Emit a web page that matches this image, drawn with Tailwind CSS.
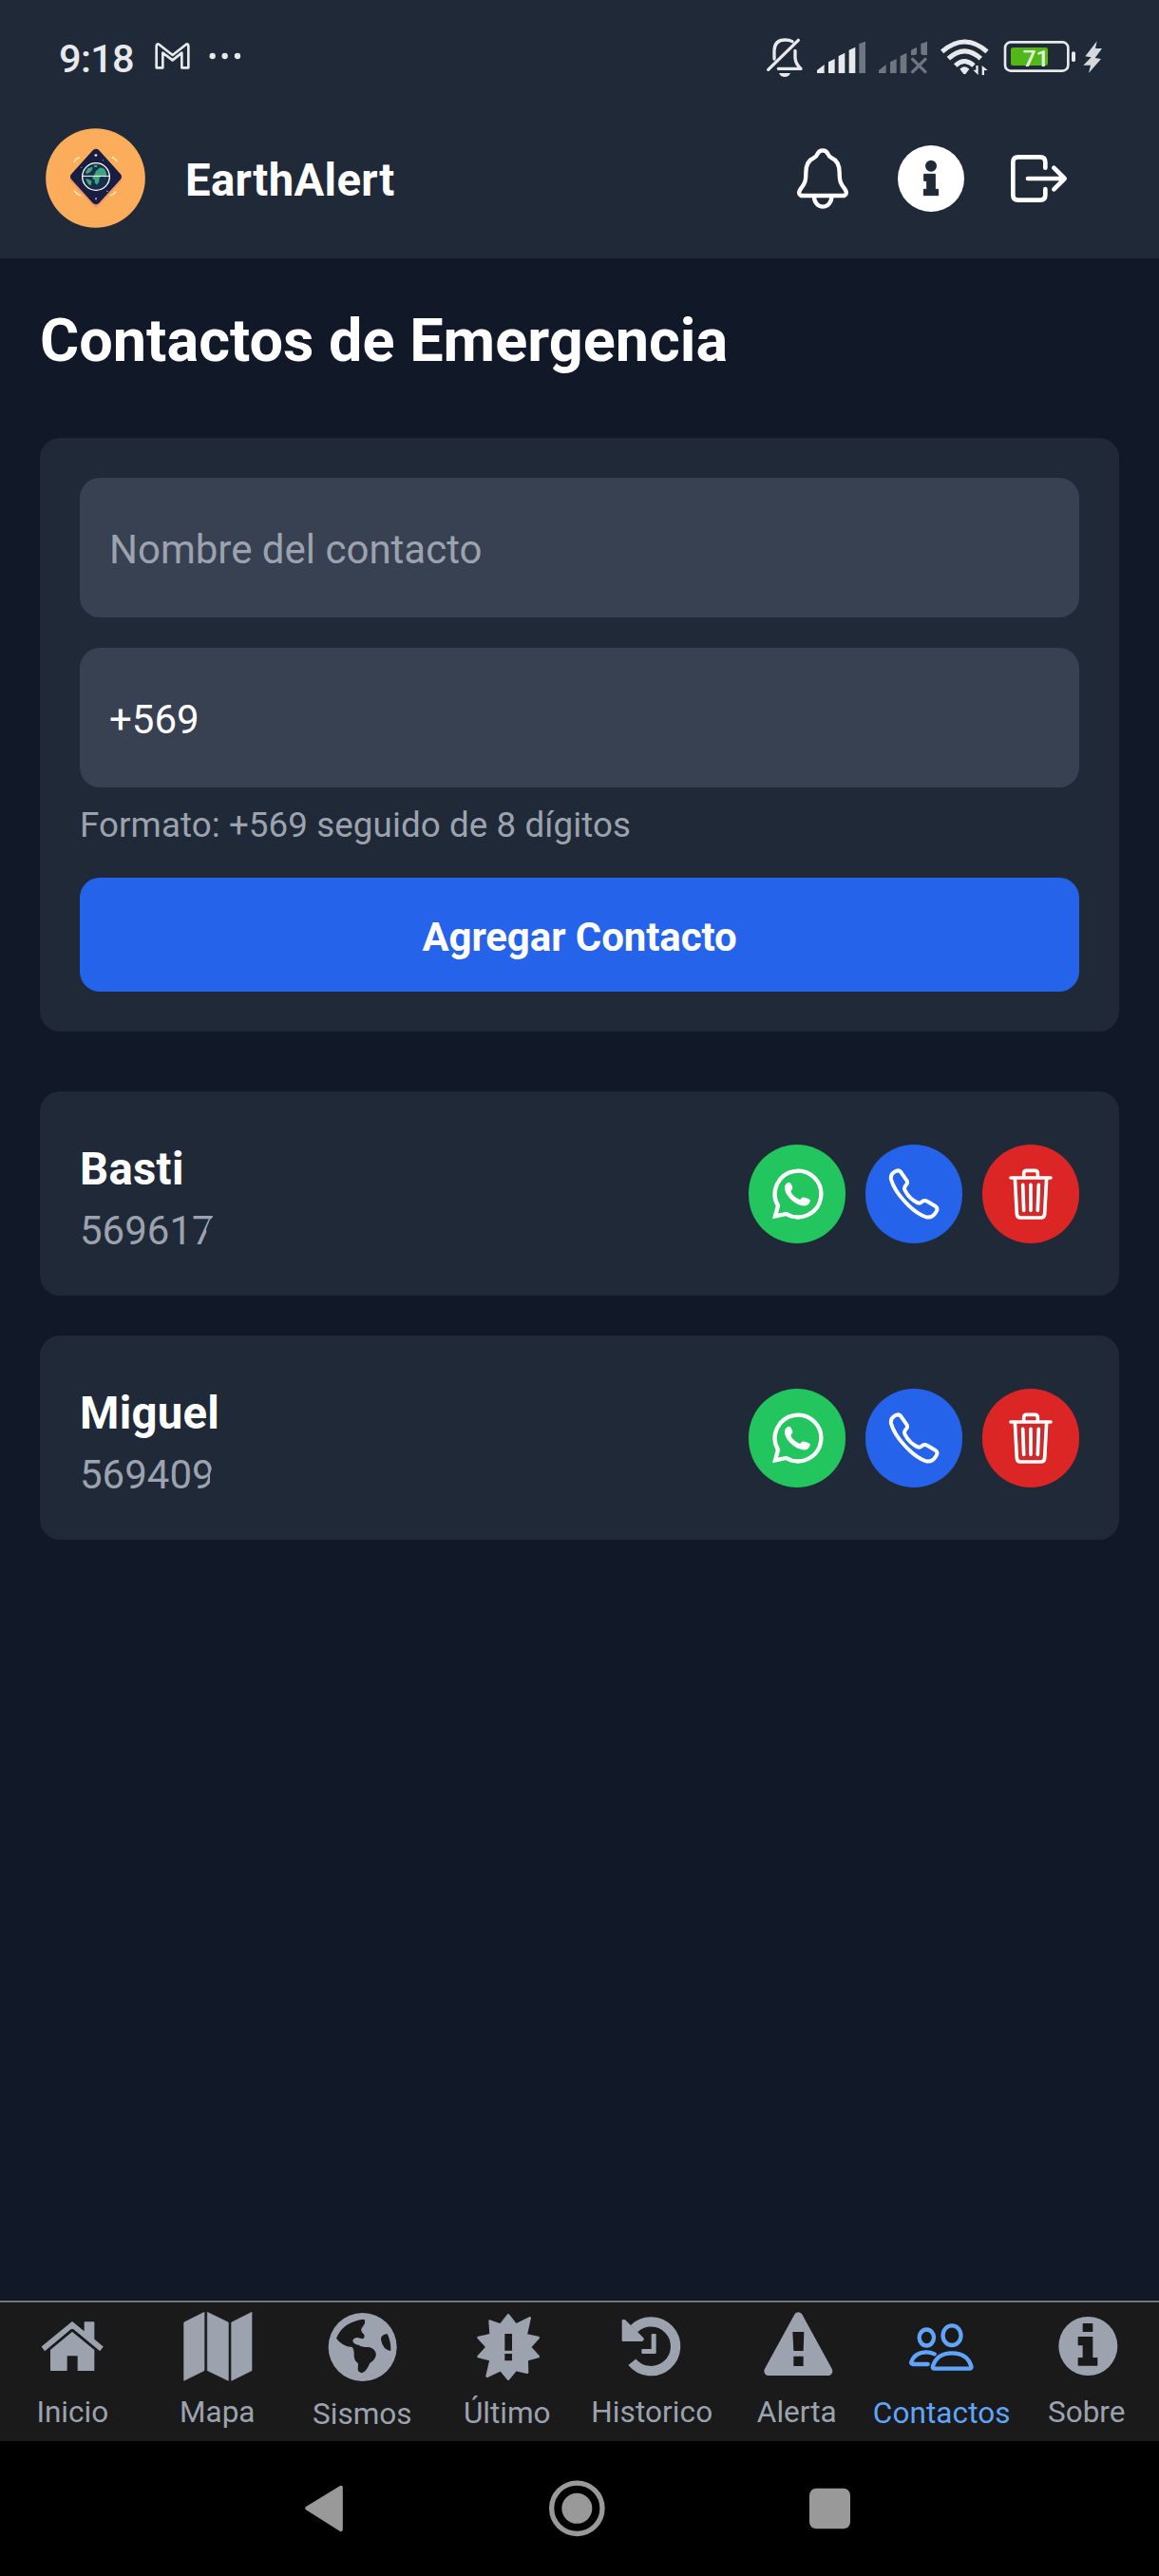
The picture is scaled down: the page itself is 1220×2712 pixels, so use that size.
<!DOCTYPE html>
<html lang="es">
<head>
<meta charset="utf-8">
<title>EarthAlert</title>
<script src="https://cdn.jsdelivr.net/npm/@tailwindcss/browser@4"></script>
</head>
<body class="bg-[#111827]">
<svg class="hidden">
  <symbol id="whatsapp" viewBox="147 291 180 180">
    <path d="M168 451L177 418A73 73 0 1 1 203 444Z" fill="none" stroke="#fff" stroke-width="13"/>
    <path d="M203 349Q210 341 217 347Q224 358 223 364L217 372Q222 388 246 399L253 392Q262 389 278 399Q280 408 270 416Q252 424 224 404Q196 380 198 360Q199 352 203 349Z" fill="#fff"/>
  </symbol>
  <symbol id="call" viewBox="516 291 180 180">
    <path d="M545 311Q557 303 564 311L583 338Q588 346 581 353Q573 360 578 370Q591 396 618 409Q626 412 632 405Q640 400 648 404L673 419Q684 426 676 438Q664 458 645 454C600 440 545 375 534 335Q531 318 545 311Z" fill="none" stroke="#fff" stroke-width="12" stroke-linejoin="round"/>
  </symbol>
  <symbol id="trash" viewBox="885 291 180 180">
    <path d="M925 330L931 444Q932 456 943 456H1007Q1018 456 1019 444L1025 330Z" fill="#cf2929"/>
    <path d="M912 330H1038M953 328V316Q953 307 962 307H988Q997 307 997 316V328M925 330L931 444Q932 456 943 456H1007Q1018 456 1019 444L1025 330M950 352L953 433M975 352V433M1000 352L997 433" fill="none" stroke="#fff" stroke-width="11" stroke-linecap="round" stroke-linejoin="round"/>
  </symbol>
</svg>
<div class="flex h-[2712px] w-[1220px] flex-col overflow-hidden bg-[#111827] font-[Roboto,sans-serif] text-white">

  <header class="h-[272px] bg-[#1f2937]">
    <div class="flex h-[135px] items-start pl-[62px] pr-[59px] text-[#e7e9ec]">
      <span class="mt-[37px] w-[101px] text-[41.5px] leading-[50px] font-medium tracking-[-0.7px]">9:18</span>
      <svg class="mt-[44px] h-[30px] w-[38px]" viewBox="489 132 114 90"><path d="M494 214V146Q494 136 503 141L545 174L587 141Q595 136 595 146V214H574V167L545 190L514 167V214Z" fill="none" stroke="currentColor" stroke-width="8" stroke-linejoin="round"/></svg>
      <svg class="mt-[54px] ml-[18px] h-[10px] w-[36px]" viewBox="657 162 108 30"><g fill="currentColor"><circle cx="671" cy="177" r="9.5"/><circle cx="710" cy="177" r="9.5"/><circle cx="750" cy="177" r="9.5"/></g></svg>
      <div class="mt-[39px] ml-auto flex">
        <svg class="h-[43px] w-[40px]" viewBox="78 117 120 129"><g fill="none" stroke="currentColor" stroke-width="10" stroke-linecap="round" stroke-linejoin="round"><path d="M105 186V160Q106 126 139 126Q153 126 162 131M171 160V183Q173 203 189 217H118M86 220L181 127"/></g><path d="M120 231H156Q151 243 138 243Q125 243 120 231Z" fill="currentColor"/></svg>
        <svg class="ml-[13px] h-[43px] w-[53px]" viewBox="237 117 159 129"><path fill="currentColor" d="M240 231V222L263 204V231ZM276 231V196L296 186V231ZM308 231V177L328 167V231ZM341 231V158L361 149V231Z"/><path fill="#6f7681" d="M373 231V138L393 131V231Z"/></svg>
        <svg class="ml-[12px] h-[43px] w-[53px]" viewBox="432 117 159 129"><path fill="#6f7681" d="M435 231V222L458 204V231ZM471 231V196L491 186V231ZM503 231V177L523 167V231ZM537 174V158L555 149V170L550 174ZM568 170V138L588 131V174H574Z"/><path d="M542 187L582 227M582 187L542 227" stroke="#6f7681" stroke-width="10" stroke-linecap="round"/></svg>
        <svg class="ml-[12px] h-[43px] w-[53px]" viewBox="627 117 159 129"><g fill="none" stroke="currentColor" stroke-width="15"><path d="M635 163Q706 101 777 163"/><path d="M655 185Q706 138 757 185"/><path d="M677 207Q706 180 735 207"/></g><path fill="currentColor" d="M691 218Q706 204 721 218L709 234H703ZM742 207H749V237L733 221H742ZM761 237V207L779 222H768V237Z"/></svg>
        <svg class="ml-[14px] h-[43px] w-[76px]" viewBox="828 117 228 129"><rect x="834" y="133" width="199" height="91" rx="18" fill="none" stroke="currentColor" stroke-width="8"/><rect x="852" y="150" width="117" height="57" rx="7" fill="#52b81a"/><rect x="1044" y="163" width="12" height="32" rx="5" fill="currentColor"/><text x="890" y="210" font-family="Roboto" font-size="73" font-weight="500" fill="#e9fbe0">71</text></svg>
        <svg class="ml-[7px] h-[43px] w-[22px]" viewBox="1077 117 66 129"><path fill="#d5d8dc" d="M1124 130L1087 178L1106 181L1081 206L1104 206L1098 231L1137 186L1118 183L1140 153L1119 153Z"/></svg>
      </div>
    </div>
    <div class="flex h-[105px] items-center pl-[48px] pr-[96px]">
      <svg class="h-[105px] w-[105px]" viewBox="144 405 315 315">
        <circle cx="301.500" cy="562.500" r="157" fill="#fbad5b"/>
        <path d="M303 486L373 566L303 642L233 566Z" fill="#f09668" stroke="#f09668" stroke-width="24" stroke-linejoin="round"/>
        <path d="M303 484L370 558L303 632L236 558Z" fill="#191d42" stroke="#191d42" stroke-width="27" stroke-linejoin="round"/>
        <path d="M233 513Q240 500 252 496M353 496Q365 500 369 511M235 602Q241 614 257 617M349 617Q361 614 366 605" fill="none" stroke="#fff0c9" stroke-width="4"/>
        <circle cx="303" cy="557" r="42" fill="#16304a"/>
        <path fill="#3fa380" d="M270 545L277 532L292 527V535L285 544L275 549ZM297 521H307V528H297ZM299 549L303 540L317 529L330 533L337 549L333 560L322 556L314 561L313 574L306 584L299 577V568L291 564ZM270 564L281 567L290 572L287 586L279 582Z"/>
        <circle cx="303" cy="558" r="43" fill="none" stroke="#fff" stroke-width="4"/>
        <path d="M260 556H347M303 486V495M298 490H307M303 624V631" stroke="#fff" stroke-width="3"/>
        <path d="M255 529H259M336 604H342M324 506H327" stroke="#54b9a0" stroke-width="3"/>
      </svg>
      <h1 class="ml-[42px] pt-[5px] text-[47.25px] leading-[60px] font-bold tracking-[0.35px]">EarthAlert</h1>
      <svg class="ml-auto h-[70px] w-[60px]" viewBox="168 459 180 210"><g fill="none" stroke="#fff" stroke-width="13" stroke-linejoin="round"><path d="M258 475Q246 475 241 487Q238 495 231 498C210 507 205 525 205 545C205 575 200 583 188 597Q178 612 190 618H326Q338 612 328 597C316 583 311 575 311 545C311 525 306 507 285 498Q278 495 275 487Q270 475 258 475Z"/><path d="M231 622A27.500 31 0 0 0 286 622"/></g></svg>
      <svg class="ml-[49px] h-[70px] w-[70px]" viewBox="495 459 210 210"><circle cx="600" cy="564" r="105" fill="#fff"/><circle cx="600" cy="524" r="18" fill="#1f2937"/><path d="M578 550H613V598H623V617H577V598H587V571H578Z" fill="#1f2937" stroke="#1f2937" stroke-width="3" stroke-linejoin="round"/></svg>
      <svg class="ml-[49px] h-[70px] w-[60px]" viewBox="853 459 180 210"><path d="M962 530V512Q962 496 946 496H876Q860 496 860 512V616Q860 632 876 632H946Q962 632 962 616V597M907 564H1020M989 530L1023 564L989 598" fill="none" stroke="#fff" stroke-width="14" stroke-linecap="round" stroke-linejoin="round"/></svg>
    </div>
  </header>

  <main class="flex-1 px-[42px] pt-[45px]">
    <h2 class="text-[63px] leading-[84px] font-bold">Contactos de Emergencia</h2>

    <section class="mt-[60px] h-[625px] rounded-[21px] bg-[#1f2937] p-[42px]">
      <div class="flex h-[147px] items-center rounded-[21px] bg-[#374151] px-[31px] pt-[3px] text-[42px] text-[#9ca3af]">Nombre del contacto</div>
      <div class="mt-[32px] flex h-[147px] items-center rounded-[21px] bg-[#374151] px-[31px] pt-[3px] text-[42px]">+569</div>
      <p class="mt-[15px] h-[80px] text-[36.75px] leading-[50px] tracking-[0.08px] text-[#9ca3af]">Formato: +569 seguido de 8 dígitos</p>
      <div class="flex h-[120px] items-center justify-center rounded-[21px] bg-[#2563eb] pt-[5px] text-[42px] font-bold tracking-[-0.1px]">Agregar Contacto</div>
    </section>

    <section class="mt-[63px] flex h-[215px] items-start justify-between rounded-[21px] bg-[#1f2937] px-[42px]">
      <div class="pt-[53px]">
        <p class="text-[47.25px] leading-[58px] font-bold tracking-[0.3px]">Basti</p>
        <p class="mt-[11px] text-[42px] leading-[49px] text-[#9ca3af] [clip-path:polygon(0_0,143px_0,142px_9px,137px_13px,133px_23px,134px_29px,134px_49px,0_49px)]">569617</p>
      </div>
      <div class="mt-[56px] flex gap-[21px]">
        <span class="flex h-[104px] w-[102px] items-center justify-center rounded-full bg-[#22c55e]"><svg class="h-[60px] w-[60px]"><use href="#whatsapp"/></svg></span>
        <span class="flex h-[104px] w-[102px] items-center justify-center rounded-full bg-[#2563eb]"><svg class="h-[60px] w-[60px]"><use href="#call"/></svg></span>
        <span class="flex h-[104px] w-[102px] items-center justify-center rounded-full bg-[#dc2626]"><svg class="h-[60px] w-[60px]"><use href="#trash"/></svg></span>
      </div>
    </section>

    <section class="mt-[42px] flex h-[215px] items-start justify-between rounded-[21px] bg-[#1f2937] px-[42px]">
      <div class="pt-[53px]">
        <p class="text-[47.25px] leading-[58px] font-bold tracking-[0.3px]">Miguel</p>
        <p class="mt-[11px] text-[42px] leading-[49px] text-[#9ca3af] [clip-path:polygon(0_0,140px_0,140px_15px,137px_24px,137px_49px,0_49px)]">569409</p>
      </div>
      <div class="mt-[56px] flex gap-[21px]">
        <span class="flex h-[104px] w-[102px] items-center justify-center rounded-full bg-[#22c55e]"><svg class="h-[60px] w-[60px]"><use href="#whatsapp"/></svg></span>
        <span class="flex h-[104px] w-[102px] items-center justify-center rounded-full bg-[#2563eb]"><svg class="h-[60px] w-[60px]"><use href="#call"/></svg></span>
        <span class="flex h-[104px] w-[102px] items-center justify-center rounded-full bg-[#dc2626]"><svg class="h-[60px] w-[60px]"><use href="#trash"/></svg></span>
      </div>
    </section>
  </main>

  <nav class="grid h-[148px] grid-cols-8 border-t-2 border-[#737477] bg-[#1a1a1a] pt-[6px] text-[31.5px] leading-[42px] text-[#9ca3af]">
    <div class="flex flex-col items-center">
      <svg class="h-[80px] w-[90px]" viewBox="94 90 270 240"><g fill="currentColor" stroke="currentColor" stroke-width="4" stroke-linejoin="round"><path d="M229 134L269 167V135H297V189L325 212L316 223L229 151L143 223L134 212Z"/><path d="M229 167L297 223V286H248V239H211V286H162V223Z"/></g></svg>
      <span class="mt-[9px]">Inicio</span>
    </div>
    <div class="flex flex-col items-center">
      <svg class="h-[80px] w-[90px]" viewBox="551 90 270 240"><path fill="currentColor" stroke="currentColor" stroke-width="2" stroke-linejoin="round" d="M580 135L644 103V287L580 319ZM654 103L720 135V319L654 287ZM730 135L794 103V287L730 319Z"/></svg>
      <span class="mt-[9px]">Mapa</span>
    </div>
    <div class="flex flex-col items-center">
      <svg class="h-[80px] w-[90px]" viewBox="1009 90 270 240"><circle cx="1146" cy="213" r="108" fill="currentColor"/><path fill="#1a1a1a" d="M1063 185Q1085 132 1150 125Q1156 130 1152 140L1142 155Q1140 165 1150 172Q1155 185 1145 187L1130 183Q1115 184 1115 195Q1120 205 1135 207Q1140 213 1165 213Q1182 215 1188 232Q1190 244 1180 255Q1168 262 1165 272Q1155 292 1143 295Q1133 293 1131 285L1132 265Q1119 255 1119 240Q1120 220 1113 213Q1080 210 1063 185ZM1224 171Q1203 173 1204 190Q1210 222 1235 225Q1236 195 1224 171Z"/></svg>
      <span class="mt-[11px]">Sismos</span>
    </div>
    <div class="flex flex-col items-center">
      <svg class="h-[80px] w-[90px]" viewBox="266 90 270 240"><path fill="currentColor" stroke="currentColor" stroke-width="8" stroke-linejoin="round" d="M404 112L428 143L472 121L460 175L499 183L472 213L499 243L463 253L464 293L428 285L404 314L380 285L337 305L349 253L310 243L337 213L310 183L349 174L346 131L380 143Z"/><path fill="#1a1a1a" d="M393 171H416V224H393ZM393 234H416V256H393Z"/></svg>
      <span class="mt-[10px]">Último</span>
    </div>
    <div class="flex flex-col items-center">
      <svg class="h-[80px] w-[90px]" viewBox="724 90 270 240"><path d="M797 260A77.500 77.500 0 1 0 803 155" fill="none" stroke="currentColor" stroke-width="31"/><path fill="currentColor" stroke="currentColor" stroke-width="6" stroke-linejoin="round" d="M768 129H773L831 186V189L828 192H768ZM861 174H870V231H830V222H861Z"/></svg>
      <span class="mt-[9px] tracking-[0.1px]">Historico</span>
    </div>
    <div class="flex flex-col items-center">
      <svg class="h-[80px] w-[90px]" viewBox="-19 90 270 240"><path d="M120 117L214 289H26Z" fill="currentColor" stroke="currentColor" stroke-width="28" stroke-linejoin="round"/><path fill="#1a1a1a" d="M102 165H138L136 225H105ZM105 242H136V273H105Z"/></svg>
      <span class="mt-[9px]">Alerta</span>
    </div>
    <div class="flex flex-col items-center text-[#60a5fa]">
      <svg class="h-[80px] w-[90px]" viewBox="439 90 270 240"><g fill="none" stroke="currentColor" stroke-width="13" stroke-linecap="round" stroke-linejoin="round"><ellipse cx="607" cy="176" rx="28.500" ry="31"/><ellipse cx="527" cy="183" rx="23" ry="25.500"/><path d="M552 281H662Q670 281 668 273Q655 232 607 232Q560 232 547 273Q545 281 552 281ZM531 267H485Q477 267 479 260Q490 229 527 229Q540 229 552 235"/></g></svg>
      <span class="mt-[10px] tracking-[0.1px]">Contactos</span>
    </div>
    <div class="flex flex-col items-center">
      <svg class="h-[80px] w-[90px]" viewBox="896 90 270 240"><circle cx="1035" cy="210" r="93" fill="currentColor"/><path fill="#1a1a1a" stroke="#1a1a1a" stroke-width="4" stroke-linejoin="round" d="M1020 140H1048V163H1020ZM1005 182H1048V248H1063V270H1005V248H1020V206H1005Z"/></svg>
      <span class="mt-[9px]">Sobre</span>
    </div>
  </nav>

  <footer class="flex h-[142px] items-start bg-black pt-[41px] pl-[311px] text-[#999999]">
    <svg class="h-[60px] w-[60px]" viewBox="933 633 180 180"><path d="M969 722L1077 656V790Z" fill="currentColor" stroke="currentColor" stroke-width="11" stroke-linejoin="round"/></svg>
    <svg class="ml-[206px] h-[60px] w-[60px]" viewBox="531 633 180 180"><circle cx="622" cy="722.500" r="80" fill="none" stroke="currentColor" stroke-width="16"/><circle cx="622" cy="722.500" r="48" fill="currentColor"/></svg>
    <svg class="ml-[207px] h-[60px] w-[60px]" viewBox="132 633 180 180"><rect x="156" y="659" width="129" height="128" rx="22" fill="currentColor"/></svg>
  </footer>
</div>
</body>
</html>
